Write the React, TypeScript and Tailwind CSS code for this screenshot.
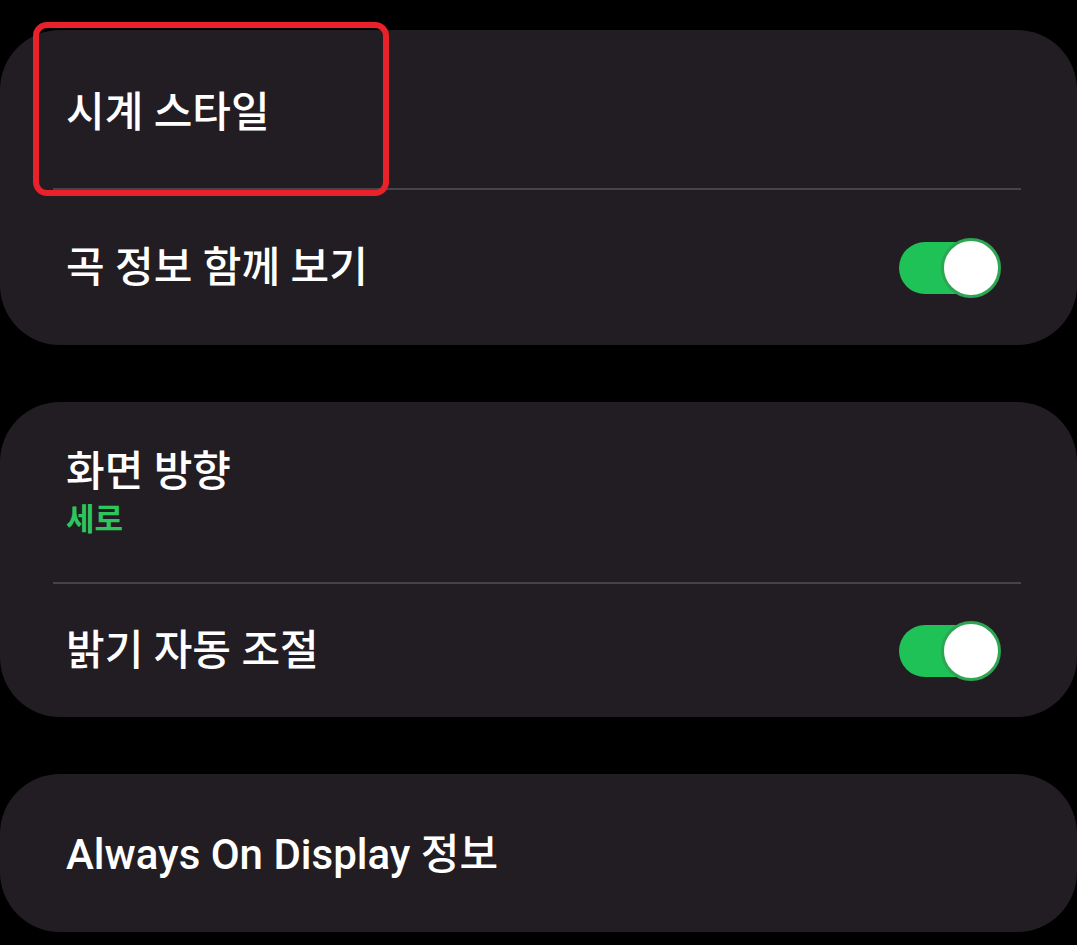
export default function App() {
  return (
    <div
      className="relative w-[1077px] h-[945px] bg-black overflow-hidden pt-[30px] flex flex-col gap-[57px]"
      style={{ fontFamily: 'Roboto, "Noto Sans CJK KR", sans-serif' }}
    >
      {/* 카드 1 */}
      <div className="bg-[#221d22] rounded-[60px] flex flex-col">
        <div className="h-[158px] flex items-center pl-[66px] pt-[6px]">
          <span className="text-white text-[42px] font-medium">시계 스타일</span>
        </div>
        <div className="mx-[53px] w-[968px] h-[2px] bg-[#48424a]" />
        <div className="h-[155px] flex items-center justify-between pl-[66px] pr-[76px]">
          <span className="text-white text-[42px] font-medium">곡 정보 함께 보기</span>
          <Toggle />
        </div>
      </div>

      {/* 카드 2 */}
      <div className="bg-[#221d22] rounded-[60px] flex flex-col">
        <div className="h-[180px] flex flex-col justify-center pl-[66px] pt-[4px]">
          <span className="text-white text-[42px] font-medium leading-[52px]">화면 방향</span>
          <span className="text-[#2ec55c] text-[31px] font-bold leading-[44px]">세로</span>
        </div>
        <div className="mx-[53px] w-[968px] h-[2px] bg-[#48424a]" />
        <div className="h-[133px] flex items-center justify-between pl-[66px] pr-[76px]">
          <span className="text-white text-[42px] font-medium">밝기 자동 조절</span>
          <Toggle />
        </div>
      </div>

      {/* 카드 3 */}
      <div className="bg-[#221d22] rounded-[60px] h-[158px] flex items-center pl-[66px] pt-[2px]">
        <span className="text-white text-[42px] font-medium">Always On Display 정보</span>
      </div>

      {/* 강조 표시 */}
      <div className="absolute left-[33px] top-[22px] w-[356px] h-[174px] border-[6px] border-[#e8212b] rounded-[14px] pointer-events-none" />
    </div>
  )
}

function Toggle() {
  return (
    <div className="relative w-[102px] h-[60px] flex items-center">
      <div className="w-[90px] h-[52px] rounded-full bg-[#1fc257]" />
      <div className="absolute right-0 top-0 w-[60px] h-[60px] rounded-full bg-white border-[3px] border-[#2ea552]" />
    </div>
  )
}
